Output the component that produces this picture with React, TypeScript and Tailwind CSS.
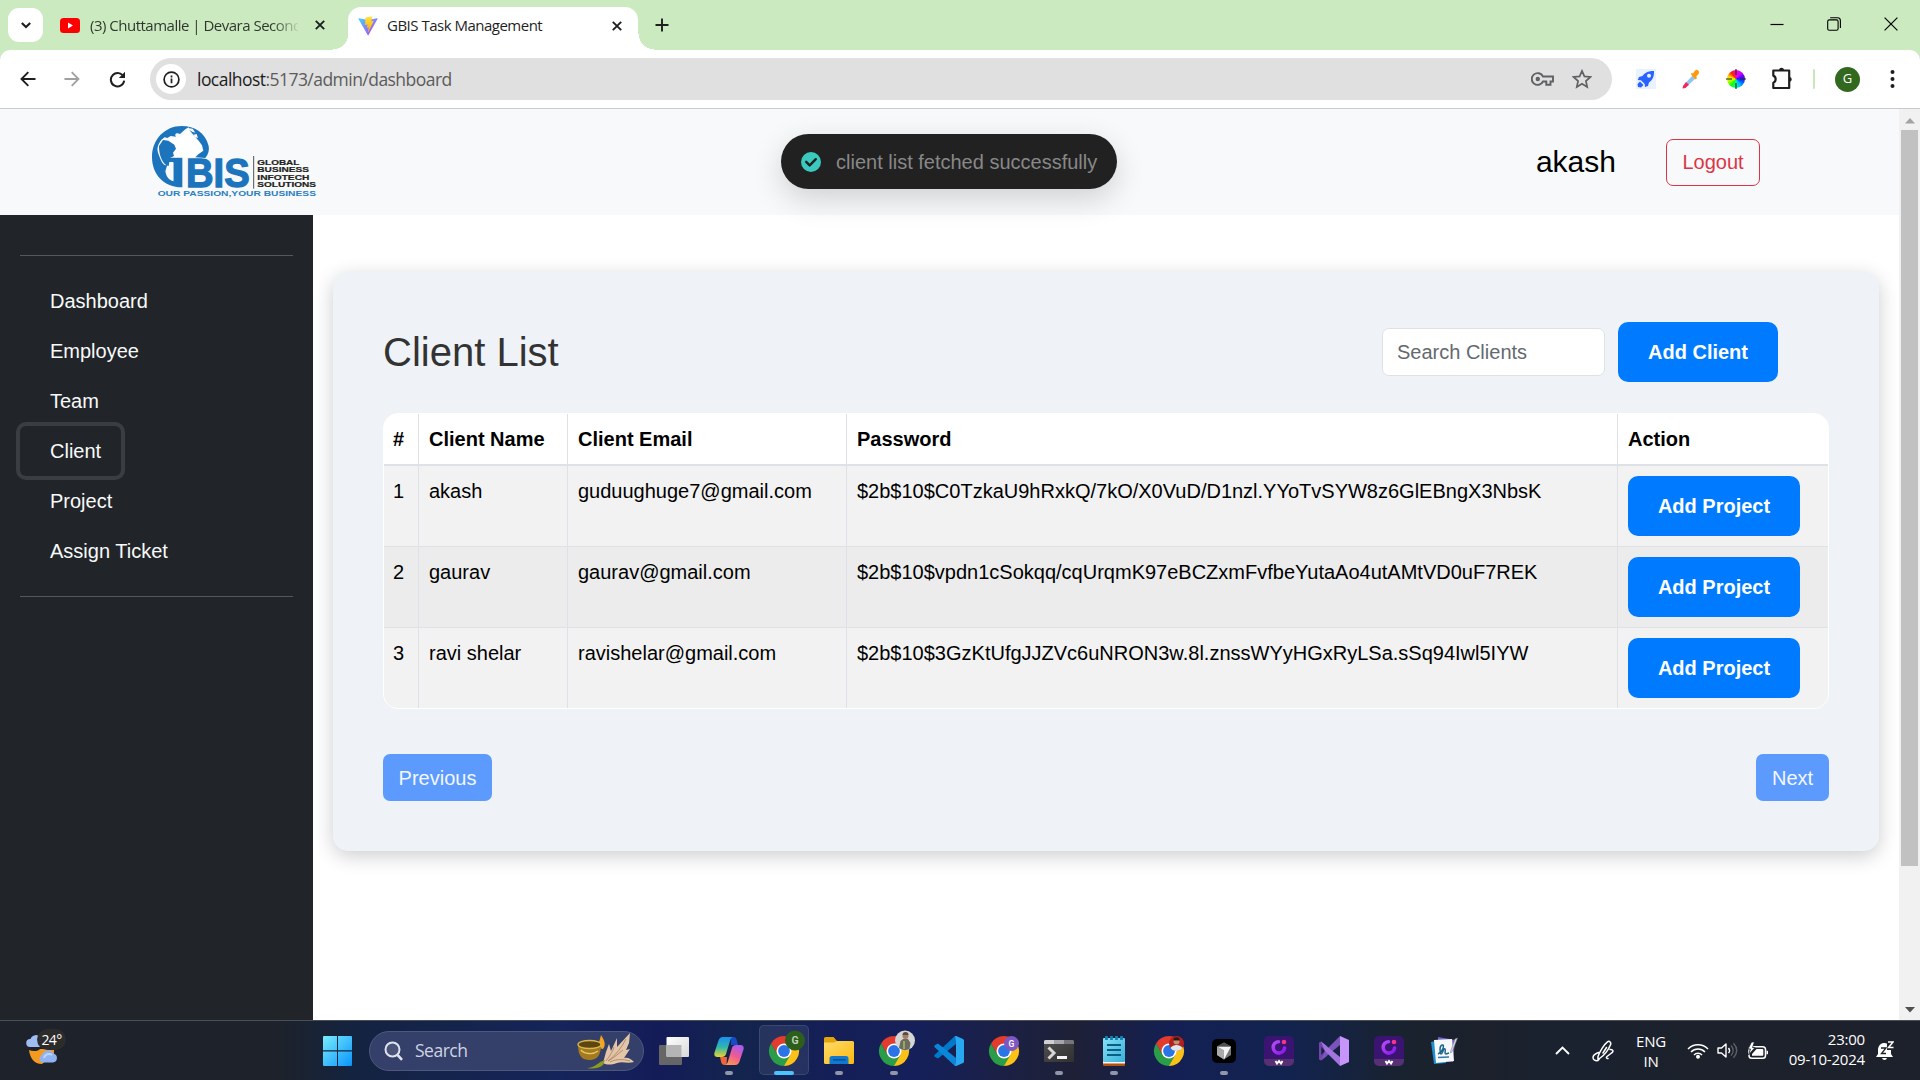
import React from "react";

const clients = [
  { id: 1, name: "akash", email: "guduughuge7@gmail.com", password: "$2b$10$C0TzkaU9hRxkQ/7kO/X0VuD/D1nzl.YYoTvSYW8z6GlEBngX3NbsK" },
  { id: 2, name: "gaurav", email: "gaurav@gmail.com", password: "$2b$10$vpdn1cSokqq/cqUrqmK97eBCZxmFvfbeYutaAo4utAMtVD0uF7REK" },
  { id: 3, name: "ravi shelar", email: "ravishelar@gmail.com", password: "$2b$10$3GzKtUfgJJZVc6uNRON3w.8l.znssWYyHGxRyLSa.sSq94Iwl5IYW" },
];

const navItems = ["Dashboard", "Employee", "Team", "Client", "Project", "Assign Ticket"];

type P = { className?: string };

const Cross = ({ className = "" }: P) => (
  <svg className={className} width="10" height="10" viewBox="0 0 10 10" stroke="#1f1f1f" strokeWidth="1.9" fill="none">
    <path d="M.8 .8 9.2 9.2M9.2 .8 .8 9.2" />
  </svg>
);

/* ---------- Browser chrome ---------- */

function TabStrip() {
  return (
    <div className="flex h-[50px] w-full items-start bg-[#cbeabf]">
      <div className="ml-2 mt-2 flex h-[34px] w-[35px] shrink-0 items-center justify-center rounded-[11px] bg-white">
        <svg width="10" height="7" viewBox="0 0 10 7" fill="none" stroke="#1f1f1f" strokeWidth="2.1">
          <path d="M.8 .9 5 5.1 9.2 .9" />
        </svg>
      </div>
      <div className="ml-[17px] flex h-[50px] w-[273px] shrink-0 items-center">
        <svg width="20" height="15" viewBox="0 0 20 15" className="shrink-0">
          <rect width="20" height="15" rx="3.5" fill="#f00" />
          <path d="M8 4.4 13 7.5 8 10.6z" fill="#fff" />
        </svg>
        <div className="ml-[10px] w-[208px] overflow-hidden whitespace-nowrap bg-linear-to-r from-[#2f352d] from-88% to-[#2f352d]/10 bg-clip-text text-[15px] tracking-[-0.5px] text-transparent">
          (3) Chuttamalle | Devara Second
        </div>
        <Cross className="ml-[17px]" />
      </div>
      <div className="flex h-[50px] shrink-0 items-end">
        <div className="h-4 w-4 -mr-px bg-[radial-gradient(circle_at_0_0,#cbeabf_15px,#fff_15.5px)]" />
        <div className="flex h-[43px] w-[290px] items-center rounded-t-[13px] bg-white pb-4 pl-[10px] pt-[10px]">
          <svg width="20" height="20" viewBox="0 0 410 404" className="shrink-0">
            <defs>
              <linearGradient id="viteA" x1="0" y1="0" x2="1" y2="1"><stop stopColor="#41d1ff" /><stop offset="1" stopColor="#bd34fe" /></linearGradient>
              <linearGradient id="viteB" x1="0" y1="0" x2="0" y2="1"><stop stopColor="#ffea83" /><stop offset=".1" stopColor="#ffdd35" /><stop offset="1" stopColor="#ffa800" /></linearGradient>
            </defs>
            <path fill="url(#viteA)" d="M399.6 59.5 215.6 388.5c-3.8 6.8-13.5 6.8-17.4.1L10.6 59.6c-4.2-7.4 2.1-16.4 10.5-14.9L205.2 77.6c1.2.2 2.4.2 3.5 0l180.3-32.8c8.4-1.5 14.7 7.4 10.6 14.7z" />
            <path fill="url(#viteB)" d="M292.9 1.6 156.8 28.2c-2.2.4-3.9 2.3-4 4.6l-8.4 141.3c-.2 3.3 2.9 5.9 6.1 5.2l37.9-8.8c3.5-.8 6.7 2.3 6 5.9l-11.3 55.1c-.8 3.7 2.7 6.9 6.3 5.8l23.4-7.1c3.6-1.1 7.1 2.1 6.3 5.8l-17.9 86.6c-1.1 5.4 6.1 8.4 9.1 3.7l2-3.1L323.2 101.8c1.9-3.7-1.3-7.9-5.4-7.1l-39 7.5c-3.7.7-6.8-2.7-5.7-6.3l25.4-88.2c1.1-3.6-2-7.1-5.7-6.1z" />
          </svg>
          <span className="ml-[9px] w-[220px] whitespace-nowrap text-[15px] tracking-[-0.5px] text-[#1f1f1f]">GBIS Task Management</span>
          <Cross className="ml-[5px]" />
        </div>
        <div className="h-4 w-4 bg-[radial-gradient(circle_at_100%_0,#cbeabf_15px,#fff_15.5px)]" />
      </div>
      <svg className="ml-[1px] mt-[18px] shrink-0" width="14" height="14" viewBox="0 0 14 14" stroke="#1f1f1f" strokeWidth="1.9">
        <path d="M7 .5v13M.5 7h13" />
      </svg>
      <div className="ml-auto mr-[22px] mt-[17px] flex items-center gap-[43px]">
        <svg width="14" height="14" viewBox="0 0 14 14" stroke="#000" strokeWidth="1.2"><path d="M.5 7.5h13" /></svg>
        <svg width="14" height="14" viewBox="0 0 14 14" stroke="#000" strokeWidth="1.1" fill="none">
          <rect x=".7" y="2.9" width="10.4" height="10.4" rx="1.6" />
          <path d="M3.2 .8h7.3a2.9 2.9 0 0 1 2.9 2.9V11" />
        </svg>
        <svg width="14" height="14" viewBox="0 0 14 14" stroke="#000" strokeWidth="1.2"><path d="M.6.6 13.4 13.4M13.4.6.6 13.4" /></svg>
      </div>
    </div>
  );
}

function Toolbar() {
  return (
    <div className="h-[59px] bg-[#cbeabf]">
      <div className="flex h-[59px] items-center rounded-t-[10px] border-b border-[#c8cacb] bg-white">
        <svg className="ml-5 shrink-0" width="16" height="16" viewBox="0 0 16 16" fill="none" stroke="#1f1f1f" strokeWidth="1.9">
          <path d="M15.5 8H1.8M8.3 1.2 1.5 8l6.8 6.8" />
        </svg>
        <svg className="ml-[28px] shrink-0" width="16" height="16" viewBox="0 0 16 16" fill="none" stroke="#a0a0a0" strokeWidth="1.8">
          <path d="M.5 8h13.7M7.7 1.2 14.5 8l-6.8 6.8" />
        </svg>
        <svg className="ml-[29px] shrink-0" width="17" height="17" viewBox="0 0 17 17">
          <path d="M14.6 5.8A6.7 6.7 0 1 0 15.2 9.7" fill="none" stroke="#1f1f1f" strokeWidth="2" />
          <path d="M16 .8V7H9.8z" fill="#1f1f1f" />
        </svg>
        <div className="ml-6 flex h-[42px] w-[1462px] shrink-0 items-center rounded-full bg-[#e0e0e0]">
          <div className="ml-[6px] flex h-[30px] w-[30px] items-center justify-center rounded-full bg-white">
            <svg width="17" height="17" viewBox="0 0 17 17" fill="none" stroke="#1f1f1f" strokeWidth="1.7">
              <circle cx="8.5" cy="8.5" r="7.4" />
              <path d="M8.5 7.5v4.7M8.5 4.6v1.8" />
            </svg>
          </div>
          <div className="ml-[11px] whitespace-nowrap text-[17.5px] tracking-[-0.54px] text-[#5b5b5b]">
            <span className="text-[#1c1c1c]">localhost</span>:5173/admin/dashboard
          </div>
          <svg className="ml-auto" width="23" height="14" viewBox="0 0 23 14" fill="none" stroke="#5f6164" strokeWidth="1.9">
            <path d="M12 4.5A5.9 5.9 0 1 0 12 9.5h3.3V12.8h4.2V9.5H22V4.5z" />
            <circle cx="6.8" cy="7" r="2.2" fill="#5f6164" stroke="none" />
          </svg>
          <svg className="ml-[18px] mr-5" width="20" height="20" viewBox="0 0 20 20" fill="none" stroke="#5f6164" strokeWidth="1.7">
            <path d="M10 1.9 12.4 7.4 18.4 8l-4.5 4 1.3 5.9L10 14.8l-5.2 3.1L6.1 12 1.6 8l6-.6z" />
          </svg>
        </div>
        <div className="ml-6 flex h-5 w-[20px] items-center justify-center bg-[#eaf2ff]">
          <svg width="18" height="18" viewBox="0 0 18 18" fill="#2962ff">
            <path d="M17 1C11 .8 7.5 3 5.5 6L2 7 .8 10l3.2.3 3.7 3.7L8 17l3-1 1-3.5C15.5 10 17.2 7 17 1z" />
            <circle cx="12" cy="5.8" r="2" fill="#eaf2ff" />
            <path d="M3 11.5 .5 14 1 17l3 .5L6.5 15z" />
          </svg>
        </div>
        <svg className="ml-[26px]" width="18" height="20" viewBox="0 0 18 20">
          <path d="M10.5 6.5 13.5 9.5 6.5 16 3.8 13.8z" fill="#8fc6f5" />
          <path d="M4 13 7 15.8 3.5 19 .5 19.5 1 17z" fill="#f5265e" />
          <path d="M8.7 5 10 4 11 4.5 13 1.5C14.5-.3 18.5 1.500 16.5 5L14.3 7.5 15 9l-1.5 1.5z" fill="#ff9a0c" />
        </svg>
        <div className="ml-[26px] flex h-5 w-5 items-center justify-center">
          <div className="h-[18px] w-[18px] rounded-full bg-[conic-gradient(#ff00c8,#d000ff,#5b00ff,#0048ff,#00b4ff,#00ffa8,#10ff00,#b4ff00,#ffd800,#ff2400,#ff00c8)]" />
          <svg className="-ml-[19px] shrink-0" width="20" height="20" viewBox="0 0 20 20">
            <path d="M10 0v6M10 14v6M0 10h6M14 10h6" stroke="#222" strokeWidth="1.1" />
          </svg>
        </div>
        <svg className="ml-[25px]" width="22" height="24" viewBox="0 0 22 24">
          <path d="M2.3 3.5H18.2V21H2.3V15.7C5.4 14.5 5.4 9.8 2.3 8.6z" fill="none" stroke="#1f1f1f" strokeWidth="2.2" strokeLinejoin="round" />
          <path d="M8 3.5a2.5 2.8 0 0 1 5 0zM18.5 9.7a2.8 2.7 0 0 1 0 5.3z" fill="#1f1f1f" />
        </svg>
        <div className="ml-5 h-5 w-[2px] rounded bg-[#c6e7ba]" />
        <div className="ml-5 flex h-[25px] w-[25px] items-center justify-center rounded-full bg-[#33691e] text-[13px] text-white">G</div>
        <svg className="ml-[30px]" width="5" height="18" viewBox="0 0 5 18" fill="#1f1f1f">
          <circle cx="2.5" cy="2" r="2" /><circle cx="2.5" cy="9" r="2" /><circle cx="2.5" cy="16" r="2" />
        </svg>
      </div>
    </div>
  );
}

/* ---------- Application page ---------- */

function CompanyLogo() {
  return (
    <svg width="220" height="100" viewBox="0 0 660 300" className="mt-px shrink-0 self-start" fontFamily="'Liberation Sans', sans-serif">
      <path fill="#1c75bc" d="M155 48C105 48 66 88 66 141C66 192 100 232 157 232V143H118L115 156H130V212C112 204 112 186 118 160C100 178 92 148 84 128C78 108 92 90 104 82L112 84L122 78L138 80C132 72 140 66 150 72L166 58L176 52L180 62L188 72L206 92L216 106L220 122L206 132L196 142L226 144C236 132 238 120 236 108C226 68 194 48 155 48z" />
      <path fill="#fff" d="M110 90 124 84 138 92 142 84 158 78 172 60 180 66 186 76 196 82 204 96 214 108 216 124 200 132 190 142H134L132 128 138 116 132 104 118 100z" opacity=".95" />
      <path fill="#f8f9fa" d="M172 54l16 2 8 12-8-2-10-6zM190 74l10-2 4 12-8-2zM86 106l8-16 12-8-8 18-4 10zM112 164l-6 20c4 20 12 26 24 30v-56h-14z" />
      <path fill="#1c75bc" d="M87 108l12-18 16 2 18 12 5 12-9 12 3 10-12 6-4 24c-18-2-30-36-29-60z" />
      <text x="168" y="231" fontSize="122" fontWeight="700" fill="#1c75bc" stroke="#1c75bc" strokeWidth="4" textLength="191" lengthAdjust="spacingAndGlyphs">BIS</text>
      <path d="M371 138v98" stroke="#333" strokeWidth="2.5" />
      <g fontSize="24" fontWeight="700" fill="#231f20" stroke="#231f20" strokeWidth=".6">
        <text x="382" y="165" textLength="126" lengthAdjust="spacingAndGlyphs">GLOBAL</text>
        <text x="382" y="187" textLength="155" lengthAdjust="spacingAndGlyphs">BUSINESS</text>
        <text x="382" y="209" textLength="156" lengthAdjust="spacingAndGlyphs">INFOTECH</text>
        <text x="382" y="231" textLength="176" lengthAdjust="spacingAndGlyphs">SOLUTIONS</text>
      </g>
      <text x="83" y="259" fontSize="20" fontWeight="700" fill="#2c7fc1" textLength="475" lengthAdjust="spacingAndGlyphs">OUR PASSION,YOUR BUSINESS</text>
    </svg>
  );
}

function Header() {
  return (
    <header className="relative flex h-[106px] items-center bg-[#f8f9fb] pl-[130px] pr-[139px]">
      <CompanyLogo />
      <div className="absolute left-[781px] top-[25px] flex h-[55px] w-[336px] items-center rounded-full bg-[#212121] pl-5 shadow-[0_10px_30px_rgba(0,0,0,0.16)]">
        <svg width="20" height="20" viewBox="0 0 20 20">
          <circle cx="10" cy="10" r="10" fill="#3bc8be" />
          <path d="M5.2 9.8 8.7 13.4 14.8 7.2" fill="none" stroke="#212121" strokeWidth="2.4" strokeLinecap="round" strokeLinejoin="round" />
        </svg>
        <span className="ml-[15px] whitespace-nowrap text-[20px] text-[#888]">client list fetched successfully</span>
      </div>
      <span className="ml-auto text-[30px] leading-none text-black">akash</span>
      <button className="ml-[50px] h-[47px] w-[94px] rounded-[7px] border border-[#dc3545] text-[20px] text-[#dc3545]">Logout</button>
    </header>
  );
}

function Sidebar() {
  return (
    <aside className="h-full w-[313px] shrink-0 bg-[#212529] px-5 pt-10">
      <div className="h-px w-[273px] bg-[#55585b]" />
      <ul className="mb-5 mt-5">
        {navItems.map((item) => (
          <li key={item} className="flex h-[50px] items-center">
            {item === "Client" ? (
              <a className="flex h-[50px] items-center rounded-[6px] pl-[30px] pr-[20px] text-[20px] text-[#f8f9fa] ring-4 ring-[#3a3e42]">{item}</a>
            ) : (
              <a className="px-[30px] text-[20px] text-[#f8f9fa]">{item}</a>
            )}
          </li>
        ))}
      </ul>
      <div className="h-px w-[273px] bg-[#55585b]" />
    </aside>
  );
}

function ClientTable() {
  return (
    <div className="mt-[31px] overflow-hidden rounded-[15px] border border-white bg-white">
      <table className="w-[1444px] table-fixed border-separate border-spacing-0 text-left text-[20px] leading-[30px] text-black">
        <colgroup>
          <col className="w-[35px]" /><col className="w-[149px]" /><col className="w-[279px]" /><col className="w-[771px]" /><col className="w-[210px]" />
        </colgroup>
        <thead>
          <tr className="h-[52px]">
            {["#", "Client Name", "Client Email", "Password", "Action"].map((h) => (
              <th key={h} className="border-b-2 border-r border-[#dee2e6] p-0 pl-[10px] font-bold first:pl-[9px] last:border-r-0">{h}</th>
            ))}
          </tr>
        </thead>
        <tbody>
          {clients.map((c) => (
            <tr key={c.id} className="group h-[81px] bg-[#f2f2f2] align-top last:h-[80px] even:bg-[#ececec]">
              {[String(c.id), c.name, c.email, c.password].map((v) => (
                <td key={v} className="whitespace-nowrap border-b border-r border-[#dee2e6] p-0 pl-[10px] pt-[10px] first:pl-[9px] group-last:border-b-0">{v}</td>
              ))}
              <td className="border-b border-[#dee2e6] p-0 pl-[10px] pt-[10px] group-last:border-b-0">
                <button className="block h-[60px] w-[172px] rounded-[10px] bg-[#007bff] font-bold text-white">Add Project</button>
              </td>
            </tr>
          ))}
        </tbody>
      </table>
    </div>
  );
}

function ClientCard() {
  return (
    <section className="ml-5 mt-[57px] h-[579px] w-[1546px] rounded-[15px] bg-[#eff3f8] px-[50px] pt-[50px] shadow-[0_5px_20px_rgba(0,0,0,0.2)]">
      <div className="flex h-[60px] items-center pr-[51px]">
        <h2 className="text-[40px] leading-none text-[#333]">Client List</h2>
        <input
          placeholder="Search Clients"
          className="ml-auto h-[48px] w-[223px] rounded-[7px] border border-[#dee2e6] bg-white px-[14px] text-[20px] placeholder:text-[#64696e]"
        />
        <button className="ml-[13px] h-[60px] w-[160px] rounded-[10px] bg-[#007bff] text-[20px] font-bold text-white">Add Client</button>
      </div>
      <ClientTable />
      <div className="mt-[45px] flex justify-between text-[20px] text-[#f3f7fe]">
        <button className="h-[47px] w-[109px] rounded-[7px] bg-[#5c9bfd]">Previous</button>
        <button className="h-[47px] w-[73px] rounded-[7px] bg-[#5c9bfd]">Next</button>
      </div>
    </section>
  );
}

function ScrollBar() {
  return (
    <div className="flex h-full w-[21px] shrink-0 flex-col items-center bg-[#f1f1f1]">
      <svg className="mt-[9px] shrink-0" width="10" height="6" viewBox="0 0 10 6"><path d="M0 5.5 5 0l5 5.500z" fill="#a3a3a3" /></svg>
      <div className="mt-[6px] h-[736px] w-[17px] bg-[#c1c1c1]" />
      <svg className="mt-[141px] shrink-0" width="10" height="6" viewBox="0 0 10 6"><path d="M0 0h10L5 5.5z" fill="#505050" /></svg>
    </div>
  );
}

/* ---------- Taskbar ---------- */

function Chrome({ children }: { children?: React.ReactNode }) {
  return (
    <svg width="36" height="36" viewBox="-3 -6 36 36" className="-mt-1.5 overflow-visible">
      <path d="M15 15 15 30A15 15 0 0 0 28 7.5H15z" fill="#fbc116" />
      <path d="M15 7.5h13a15 15 0 0 0-26 0l6.5 11.2z" fill="#e33b2e" />
      <path d="M8.5 18.7 2 7.5A15 15 0 0 0 15 30l6.5-11.2z" fill="#2a9d48" />
      <circle cx="15" cy="15" r="7.5" fill="#fff" />
      <circle cx="15" cy="15" r="5.9" fill="#2b74e8" />
      {children}
    </svg>
  );
}

const TaskView = () => (
  <svg width="30" height="30" viewBox="0 0 30 30">
    <defs><linearGradient id="tvw" x1="0" y1="0" x2="1" y2="1"><stop stopColor="#fff" /><stop offset="1" stopColor="#d9d9d9" /></linearGradient></defs>
    <rect x="0" y="9" width="23" height="20" rx="1" fill="#666" />
    <rect x="7.5" y="1" width="22.5" height="20" rx="1" fill="url(#tvw)" />
    <path d="M7.5 9H22.5V21H8.500a1 1 0 0 1-1-1z" fill="#b5b5b5" />
  </svg>
);

const Copilot = () => (
  <svg width="30" height="28" viewBox="0 0 30 28">
    <defs>
      <linearGradient id="cpa" x1="0" y1="0" x2="0" y2="1"><stop stopColor="#1b8ff0" /><stop offset=".5" stopColor="#2fb6b0" /><stop offset="1" stopColor="#e9d52c" /></linearGradient>
      <linearGradient id="cpb" x1="0.7" y1="0" x2=".2" y2="1"><stop stopColor="#a65cf0" /><stop offset=".5" stopColor="#ee5a95" /><stop offset="1" stopColor="#ff9a4a" /></linearGradient>
    </defs>
    <path d="M17 0h2.500c2.200 0 2.800 1.300 3.500 4L24 8H17z" fill="#1849c6" />
    <path d="M8.500 0H19c-1.800.6-2.500 2-3.200 4.500L12 17c-.8 2.200-2 3-4.200 3H3.500C.8 20-.2 18 .5 15.500L4.500 3.500C5.300 1.300 6.500 0 8.500 0z" fill="url(#cpa)" />
    <path d="M6 20h7l-.5 8h-2C8.300 28 7.500 26.500 7 24.500z" fill="#f0643c" />
    <path d="M21.500 28H11c1.800-.6 2.500-2 3.200-4.500L18 11c.8-2.200 2-3 4.200-3h4.300c2.700 0 3.700 2 3 4.500l-4 12C24.700 26.700 23.500 28 21.500 28z" fill="url(#cpb)" />
  </svg>
);

const Folder = () => (
  <svg width="30" height="27" viewBox="0 0 30 27">
    <defs><linearGradient id="fld" x1="0" y1="0" x2="1" y2="1"><stop stopColor="#ffdb6b" /><stop offset="1" stopColor="#fcb90f" /></linearGradient></defs>
    <path d="M0 1.500A1.500 1.500 0 0 1 1.500 0H9.500L13 4H28v6H0z" fill="#e2a30c" />
    <path d="M0 5.500 10 5.500 13 4H28.500A1.500 1.500 0 0 1 30 5.500V25.500A1.500 1.500 0 0 1 28.500 27H1.500A1.500 1.500 0 0 1 0 25.500z" fill="url(#fld)" />
    <path d="M5.500 27V21.500A2.500 2.500 0 0 1 8 19H22a2.500 2.500 0 0 1 2.500 2.500V27z" fill="#1179cf" />
    <path d="M9 22.800H21.500" stroke="#0a4e94" strokeWidth="1.5" />
  </svg>
);

const Code = () => (
  <svg width="30" height="30" viewBox="0 0 30 30">
    <path d="M22 8 4 22.500 1 21c-1-.8-1-1.800 0-2.600L21 0z" fill="#0179cb" />
    <path d="M22 22 4 7.500 1 9c-1 .8-1 1.800 0 2.600L21 30z" fill="#0b86d9" />
    <path d="M21 0 22 8v14l-1 8c.5.2 1.200.1 1.800-.2L29 27c.6-.4 1-.9 1-1.600V4.600C30 3.900 29.600 3.400 29 3L22.800.2C22.200-.1 21.500-.1 21 0z" fill="#29a8f2" />
  </svg>
);

const Terminal = () => (
  <svg width="30" height="22" viewBox="0 0 30 22">
    <defs><linearGradient id="trm" x1="0" y1="0" x2="1" y2="1"><stop stopColor="#505050" /><stop offset="1" stopColor="#303030" /></linearGradient></defs>
    <rect width="30" height="22" rx="1.5" fill="url(#trm)" />
    <path d="M0 4V1.500A1.500 1.500 0 0 1 1.500 0H10V4z" fill="#d0d0d4" />
    <path d="M10 0H20V4H10z" fill="#a4a4aa" /><path d="M20 0h8.500A1.500 1.500 0 0 1 30 1.500V4H20z" fill="#75757b" />
    <path d="M4.500 7.500 10 13 4.500 18.500" fill="none" stroke="#d7d7d7" strokeWidth="3" />
    <rect x="13" y="16" width="10" height="3" fill="#f5f5f5" />
  </svg>
);

const Notepad = () => (
  <svg width="22" height="30" viewBox="0 0 22 30">
    <defs><linearGradient id="ntp" x1="0" y1="0" x2="1" y2="1"><stop stopColor="#86e0f7" /><stop offset="1" stopColor="#38b1d8" /></linearGradient></defs>
    <rect y="24" width="22" height="6" rx="1" fill="#b4520f" /><rect y="24" width="22" height="3.5" fill="#f5f5f5" />
    <rect y="2" width="22" height="24" rx="1" fill="url(#ntp)" />
    <path d="M4 9H18M4 14H18M4 19H18" stroke="#0a5f87" strokeWidth="1.8" />
    <path d="M3.500 0v4M8.500 0v4M13.500 0v4M18.500 0v4" stroke="#1083ad" strokeWidth="2.8" />
  </svg>
);

const Cursor = () => (
  <svg width="24" height="24" viewBox="0 0 24 24">
    <rect width="24" height="24" rx="5" fill="#000" />
    <path d="M12 3.500 19 7.500V16L12 20.500 5 16V7.500z" fill="#777" />
    <path d="M5 7.500H19L12 20.500V11.500z" fill="#f4f4f4" />
    <path d="M5 7.500 12 11.500V20.500L5 16z" fill="#aaa" /><path d="M5 7.500 12 3.500l7 4z" fill="#505050" />
  </svg>
);

const Recorder = () => (
  <svg width="30" height="30" viewBox="0 0 30 30">
    <defs><linearGradient id="rcd" x1="1" y1="1" x2="0" y2="0"><stop stopColor="#8a17ee" /><stop offset="1" stopColor="#b24cf5" /></linearGradient></defs>
    <rect width="30" height="30" rx="5" fill="#3a1470" />
    <path d="M0 23H30v2a5 5 0 0 1-5 5H5a5 5 0 0 1-5-5z" fill="#563073" />
    <path d="M14.500 5.700A5.700 5.700 0 1 0 20.600 12" fill="none" stroke="url(#rcd)" strokeWidth="3.6" strokeLinecap="round" />
    <circle cx="20" cy="6" r="2.3" fill="#f5348f" />
    <path d="M11.500 25 13 27.500 15 25l2 2.500L18.500 25" fill="none" stroke="#fff" strokeWidth="1.9" />
  </svg>
);

const Studio = () => (
  <svg width="30" height="30" viewBox="0 0 30 30">
    <path d="M0 6.500 2 5.500 8 10V20L2 24.500 0 23.500z" fill="#6d46a8" />
    <path d="M2.300 11V19L6 15z" fill="#17203f" />
    <path d="M2 24.500 6 15 21 0V9z" fill="#7c53ba" />
    <path d="M2 5.500 21 21V30L6 15z" fill="#a274e0" />
    <path d="M21 0 30 4V26L21 30z" fill="#c795f9" />
  </svg>
);

const Journal = () => (
  <svg width="28" height="28" viewBox="0 0 28 28">
    <path d="M1 5 16 2v24L4 27z" fill="#1f8fd0" /><path d="M8 0 25 3 23 25 8 24z" fill="#7266c6" />
    <path d="M4 3 22 2 24 24 6 26z" fill="#f7f7fa" />
    <path d="M8 17c5-2 7-10 4-9-3 1-2 8-1 9 2 0 2-6 4-5 1 1-1 5 1 5l3-1" fill="none" stroke="#20658d" strokeWidth="1.5" />
    <path d="M8 20.500 19 20" stroke="#2d7da8" strokeWidth="1.3" />
    <path d="M27.500 1 22 15 20.500 16 20.700 14 25 2z" fill="#d9d9df" stroke="#77778a" strokeWidth=".5" />
  </svg>
);

const apps: { icon: React.ReactNode; state?: "running" | "active" }[] = [
  { icon: <TaskView /> },
  { icon: <Copilot />, state: "running" },
  { icon: <Chrome><circle cx="26" cy="4.500" r="10" fill="#2c5f1b" /><text x="26" y="8.200" fontSize="10.500" fontWeight="600" textAnchor="middle" fill="#c5d4bf" fontFamily="Roboto, sans-serif">G</text></Chrome>, state: "active" },
  { icon: <Folder />, state: "running" },
  {
    icon: (
      <Chrome>
        <circle cx="26" cy="4.500" r="10" fill="#d5d6d3" />
        <path d="M20 12 21.500 5 24 3h5l2.500 4-1 6a10 10 0 0 1-10.500-1z" fill="#6b6d62" />
        <circle cx="26.500" cy="0" r="3" fill="#a97b64" /><path d="M23.500-1a3 3 0 0 1 6 0z" fill="#5a4a40" /><path d="M25 5v8" stroke="#b3bb4c" strokeWidth="1.500" />
      </Chrome>
    ),
    state: "running",
  },
  { icon: <Code /> },
  { icon: <Chrome><circle cx="22.500" cy="7.500" r="7.500" fill="#7e57c2" /><text x="22.500" y="10.500" fontSize="8.500" fontWeight="600" textAnchor="middle" fill="#fff" fontFamily="Roboto, sans-serif">G</text></Chrome> },
  { icon: <Terminal />, state: "running" },
  { icon: <Notepad />, state: "running" },
  {
    icon: (
      <Chrome>
        <circle cx="22.500" cy="7.500" r="7.500" fill="#b3211c" />
        <path d="M16.500 12c1-2 4-3 6-3s5 1 6 3a7.500 7.500 0 0 1-12 0z" fill="#dfe5ee" />
        <circle cx="22.500" cy="5.500" r="3" fill="#c98e70" /><path d="M19.300 4.500a3.200 3.200 0 0 1 6.400 0z" fill="#2b1b18" />
      </Chrome>
    ),
  },
  { icon: <Cursor />, state: "running" },
  { icon: <Recorder /> },
  { icon: <Studio /> },
  { icon: <Recorder /> },
  { icon: <Journal /> },
];

function Weather() {
  return (
    <div className="relative ml-[26px] h-[36px] w-[42px]">
      <svg width="42" height="36" viewBox="0 0 42 36">
        <path d="M4 14a4 4 0 0 1 .5-8 6 6 0 0 1 10-2V14z" fill="#9fbdf2" />
        <path d="M3 17c4 2 10 1 11-1h14v5L16 31C8 31 4 25 3 17z" fill="#f39a1f" />
        <path d="M16 29.500a4 4 0 0 1 0-7.500 6.300 6.300 0 0 1 11.500-1.500A4.600 4.600 0 0 1 27 29.500z" fill="#8fb3f0" />
        <path d="M18 25a5 5 0 0 1 8-3" stroke="#bfd4fa" strokeWidth="2" fill="none" />
      </svg>
      <div className="absolute -top-[4px] left-[11px] flex h-[21px] w-[29px] items-center justify-center rounded-full bg-[#2c2c2b] text-[14px] tracking-[-0.7px] text-white">24°</div>
    </div>
  );
}

function SearchBox() {
  return (
    <div className="ml-[17px] flex h-10 w-[275px] shrink-0 items-center rounded-full border border-[#4c5880] bg-[#34406a]">
      <svg className="ml-[14px] shrink-0" width="19" height="20" viewBox="0 0 19 20" fill="none" stroke="#dfe3ee" strokeWidth="2">
        <circle cx="8.500" cy="8.500" r="7" fill="#4a5478" /><path d="M13.500 13.800 18 18.800" strokeWidth="2.600" />
      </svg>
      <span className="ml-[12px] text-[17.5px] tracking-[-0.5px] text-[#cfd3e2]">Search</span>
      <svg className="ml-auto mr-[8px] shrink-0" width="58" height="38" viewBox="0 0 58 38">
        <path d="M24 3c4 6 5 10 2 14l-4-1c-1-5 1-8 2-13z" fill="#f5a51b" />
        <path d="M1 13C1 25 6 28 12 28S23 26 24 15z" fill="#a37a1d" />
        <ellipse cx="12.500" cy="12.500" rx="11.500" ry="4" fill="#5e4410" stroke="#d9b64c" strokeWidth="1.300" />
        <path d="M4 18c3 4 12 5 17 1" stroke="#e6c866" strokeWidth="1.300" fill="none" />
        <path d="M26 31 29 20 32 12 34 19 40 6 40 15 53 1 52 11 49 18 53 17 47 26C51 25 54 27 57 30 50 32 46 29 40 31 34 33 30 33 26 31z" fill="#e3c6a8" />
        <path d="M29 29C33 24 36 19 37 15M31 29c8-6 14-14 18-22M33 30c6-3 13-3 20-1M31 29c6-3 11-8 15-11" stroke="#ad8468" strokeWidth=".9" fill="none" />
        <path d="M10 36c8 0 11-6 18-8l-2 5c-5 4-11 4-16 3z" fill="#8c9a1d" />
      </svg>
    </div>
  );
}

function Tray() {
  return (
    <div className="ml-auto flex h-full items-center text-white">
      <svg width="15" height="9" viewBox="0 0 15 9" fill="none" stroke="#fff" strokeWidth="1.9"><path d="M1 8 7.500 1.500 14 8" /></svg>
      <svg className="ml-[22px]" width="22" height="22" viewBox="0 0 22 22" fill="none" stroke="#fff" strokeWidth="1.5" strokeLinejoin="round" strokeLinecap="round">
        <path d="M7.500 18.500 6 20.500V16.500C8 11 12.500 4 15.500 1.800 17.500.5 19.500 2.500 18.500 4.700 16.500 9.500 12 15.500 7.500 18.500zM6.500 12.500C4 13.500 1 15 1 17.500S3.500 21 6 20.500M14.500 7.500 11 13M18 9.500c3-.5 4 2 1.500 3.500L15 16.500c-1 1-.5 2.300 1 2" />
      </svg>
      <div className="ml-[20px] flex w-[34px] flex-col items-center text-[15px] leading-[20px] tracking-[-0.2px]"><span>ENG</span><span>IN</span></div>
      <svg className="ml-[19px]" width="22" height="16" viewBox="0 0 22 16" fill="none" stroke="#fff" strokeWidth="1.5">
        <path d="M1 6A14 14 0 0 1 21 6M4 9a9.700 9.700 0 0 1 14 0M7 12a5.500 5.500 0 0 1 8 0" /><circle cx="11" cy="13.800" r="2" fill="#fff" stroke="none" />
      </svg>
      <svg className="ml-[8px]" width="22" height="17" viewBox="0 0 22 17" fill="none" stroke="#fff" strokeWidth="1.4" strokeLinejoin="round">
        <path d="M1 6H4.500L9 2V15L4.500 11H1z" /><path d="M11.500 6c1.300 1.500 1.300 3.500 0 5" /><path d="M14 3.500c2.800 3 2.800 7 0 10M16.500 1.200c4 4.500 4 10 0 14.600" stroke="#5d6268" />
      </svg>
      <svg className="ml-[8px]" width="22" height="18" viewBox="0 0 22 18">
        <rect x="2" y="4.700" width="16.500" height="11.500" rx="2.800" fill="none" stroke="#fff" strokeWidth="1.5" />
        <path d="M5 13.800V12L9.500 7H15.500a.8.800 0 0 1 .8.800v5.200a.8.800 0 0 1-.8.800z" fill="#fff" />
        <path d="M19.500 8.500 21 9v3l-1.500.6z" fill="#fff" />
        <path d="M4.500 0 1 7H3.500L1.500 13 8 5.500H5.500L7.500 0z" fill="#fff" stroke="#1c212b" strokeWidth=".8" />
      </svg>
      <div className="-mt-[3px] ml-[10px] flex w-[86px] flex-col items-end text-[15px] leading-[20px] tracking-[-0.2px]"><span>23:00</span><span className="whitespace-nowrap">09-10-2024</span></div>
      <svg className="ml-[11px] mr-[26px]" width="18" height="20" viewBox="0 0 18 20">
        <path d="M0 16 2 13V8.500A6.500 6.500 0 0 1 11 2.500V9h4v4l2 3zM6 17h5a2.600 2.600 0 0 1-5 0z" fill="#fff" />
        <path d="M12 1h5l-4.500 5.500H17.500" fill="none" stroke="#fff" strokeWidth="1.5" />
        <path d="M5 7h5L5.500 12.500H10" fill="none" stroke="#1c212b" strokeWidth="1.3" />
      </svg>
    </div>
  );
}

function Taskbar() {
  return (
    <footer className="flex h-[60px] shrink-0 items-center border-t border-[#4a4f57] bg-[linear-gradient(90deg,#1d222b_0,#1d222b_280px,#14233f_350px,#15245a_560px,#141c58_660px,#13244d_740px,#141f57_830px,#15205a_920px,#1b2045_1000px,#1e2036_1075px,#142054_1170px,#12234f_1290px,#19222f_1400px,#1c212b_1480px,#1a2230_1560px,#1c212b_1700px,#1c212b_1920px)]">
      <Weather />
      <svg className="ml-[255px] shrink-0" width="29" height="30" viewBox="0 0 29 30">
        <defs><linearGradient id="win" x1="0" y1="0" x2="1" y2="1"><stop stopColor="#78ecfd" /><stop offset="1" stopColor="#0a94fb" /></linearGradient></defs>
        <path d="M0 1a1 1 0 0 1 1-1H14V14.200H0zM15 0h13a1 1 0 0 1 1 1V14.200H15zM0 15.600H14V30H1a1 1 0 0 1-1-1zM15 15.600H29V29a1 1 0 0 1-1 1H15z" fill="url(#win)" />
      </svg>
      <SearchBox />
      <div className="ml-[2px] flex h-full">
        {apps.map((app, i) => (
          <div key={i} className="relative flex h-full w-[55px] shrink-0 items-center justify-center">
            {app.state === "active" && <div className="absolute left-[3px] top-[4px] h-[50px] w-[50px] rounded-[5px] border border-white/10 bg-white/8" />}
            <div className="relative">{app.icon}</div>
            {app.state === "active" && <div className="absolute bottom-[5px] h-1 w-5 rounded-full bg-[#4cc2ff]" />}
            {app.state === "running" && <div className="absolute bottom-[5px] h-1 w-2 rounded-full bg-[#9095a8]" />}
          </div>
        ))}
      </div>
      <Tray />
    </footer>
  );
}

export default function App() {
  return (
    <div className="flex h-[1080px] w-[1920px] flex-col overflow-hidden bg-white font-['Open_Sans',sans-serif]">
      <TabStrip />
      <Toolbar />
      <div className="flex h-[911px] shrink-0 font-['Liberation_Sans',Arial,sans-serif]">
        <div className="flex w-[1899px] flex-col">
          <Header />
          <div className="flex h-[805px]">
            <Sidebar />
            <main className="flex-1 bg-white"><ClientCard /></main>
          </div>
        </div>
        <ScrollBar />
      </div>
      <Taskbar />
    </div>
  );
}
